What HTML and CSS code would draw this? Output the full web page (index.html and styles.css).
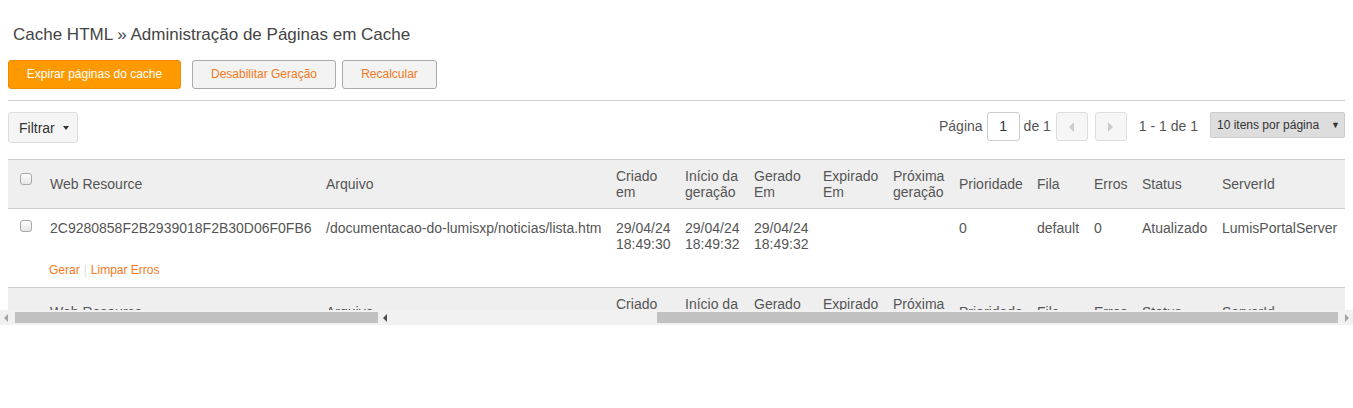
FILE: index.html
```html
<!DOCTYPE html>
<html lang="pt">
<head>
<meta charset="utf-8">
<title>Cache HTML</title>
<link rel="stylesheet" href="styles.css">
</head>
<body>
<div class="page">
  <h1 class="title">Cache HTML » Administração de Páginas em Cache</h1>
  <div class="actions">
    <button class="btn btn-primary">Expirar páginas do cache</button>
    <button class="btn btn-default btn-gap">Desabilitar Geração</button>
    <button class="btn btn-default btn-last">Recalcular</button>
  </div>
  <div class="rule"></div>
  <div class="toolbar">
    <button class="filter">Filtrar <span class="caret"></span></button>
    <div class="pager">
      <span class="ptext">Página</span>
      <span class="pinput">1</span>
      <span class="ptext">de 1</span>
      <span class="pbtn pbtn-prev"><span class="tri tri-left"></span></span>
      <span class="pbtn pbtn-next"><span class="tri tri-right"></span></span>
      <span class="ptext pcount">1 - 1 de 1</span>
      <span class="psel">10 itens por página <span class="selcaret">▼</span></span>
    </div>
  </div>
  <div class="tablewrap">
    <table class="grid">
      <colgroup>
        <col class="c-chk"><col class="c-wr"><col class="c-arq"><col class="c-d"><col class="c-d"><col class="c-d"><col class="c-e"><col class="c-p"><col class="c-pr"><col class="c-f"><col class="c-er"><col class="c-st"><col class="c-sv">
      </colgroup>
      <thead>
        <tr>
          <th class="chkcell"><span class="chk"></span></th>
          <th>Web Resource</th>
          <th>Arquivo</th>
          <th>Criado<br>em</th>
          <th>Início da<br>geração</th>
          <th>Gerado<br>Em</th>
          <th>Expirado<br>Em</th>
          <th>Próxima<br>geração</th>
          <th>Prioridade</th>
          <th>Fila</th>
          <th>Erros</th>
          <th>Status</th>
          <th>ServerId</th>
        </tr>
      </thead>
      <tbody>
        <tr class="datarow">
          <td class="chkcell"><span class="chk"></span></td>
          <td>2C9280858F2B2939018F2B30D06F0FB6</td>
          <td>/documentacao-do-lumisxp/noticias/lista.htm</td>
          <td>29/04/24<br>18:49:30</td>
          <td>29/04/24<br>18:49:32</td>
          <td>29/04/24<br>18:49:32</td>
          <td></td>
          <td></td>
          <td>0</td>
          <td>default</td>
          <td>0</td>
          <td>Atualizado</td>
          <td>LumisPortalServer</td>
        </tr>
        <tr class="actrow">
          <td></td>
          <td colspan="12" class="rowlinks"><a>Gerar</a><span class="sep">|</span><a>Limpar Erros</a></td>
        </tr>
      </tbody>
      <tfoot>
        <tr>
          <th class="chkcell"></th>
          <th>Web Resource</th>
          <th>Arquivo</th>
          <th>Criado<br>em</th>
          <th>Início da<br>geração</th>
          <th>Gerado<br>Em</th>
          <th>Expirado<br>Em</th>
          <th>Próxima<br>geração</th>
          <th>Prioridade</th>
          <th>Fila</th>
          <th>Erros</th>
          <th>Status</th>
          <th>ServerId</th>
        </tr>
      </tfoot>
    </table>
  </div>
</div>
<div class="scrollbar">
  <span class="sarrow sarrow-l"></span>
  <span class="thumb thumb-a"></span>
  <span class="sarrow sarrow-dark"></span>
  <span class="thumb thumb-b"></span>
  <span class="sarrow sarrow-r"></span>
</div>
</body>
</html>
```

FILE: styles.css
```css
* { box-sizing: border-box; }
html, body { margin: 0; padding: 0; background: #fff; }
body {
  font-family: "Liberation Sans", Arial, sans-serif;
  color: #555;
  font-size: 14px;
}
.page { padding: 25px 8px 0 8px; }
.title {
  margin: 0 0 0 5px;
  font-size: 17px;
  line-height: 20px;
  font-weight: normal;
  color: #444;
}
.actions {
  display: flex;
  margin-top: 15px;
  height: 29px;
}
.btn {
  font-family: inherit;
  font-size: 12px;
  height: 29px;
  padding: 0;
  border-radius: 3px;
  cursor: pointer;
  line-height: 27px;
  white-space: nowrap;
  text-align: center;
}
.btn-primary {
  width: 173px;
  background: #ff9900;
  border: 1px solid #f08c00;
  color: #fff;
  margin-right: 11px;
}
.btn-default {
  background: #f3f3f3;
  border: 1px solid #aaa;
  color: #f47920;
}
.btn-gap { width: 144px; margin-right: 6px; }
.btn-last { width: 95px; }
.rule {
  height: 1px;
  background: #ccc;
  margin-top: 11px;
}
.toolbar {
  display: flex;
  justify-content: space-between;
  align-items: flex-start;
  margin-top: 11px;
}
.filter {
  font-family: inherit;
  font-size: 14px;
  color: #333;
  height: 31px;
  width: 70px;
  padding: 0 0 0 10px;
  text-align: left;
  background: #f5f5f5;
  border: 1px solid #ddd;
  border-radius: 3px;
  display: flex;
  align-items: center;
}
.caret {
  display: inline-block;
  width: 0; height: 0;
  border-left: 3px solid transparent;
  border-right: 3px solid transparent;
  border-top: 4px solid #333;
  margin-left: 8px;
}
.pager {
  display: flex;
  align-items: flex-start;
}
.ptext {
  line-height: 29px;
  font-size: 14px;
  color: #555;
}
.pinput {
  width: 33px;
  height: 29px;
  border: 1px solid #ccc;
  border-radius: 3px;
  text-align: center;
  line-height: 27px;
  color: #333;
  margin: 0 4px;
}
.pbtn {
  width: 32px;
  height: 29px;
  border: 1px solid #ddd;
  border-radius: 3px;
  background: #f6f6f6;
  display: flex;
  align-items: center;
  justify-content: center;
}
.pbtn-prev { margin-left: 5px; }
.pbtn-next { margin-left: 7px; }
.tri { width: 0; height: 0; }
.tri-left {
  border-top: 5px solid transparent;
  border-bottom: 5px solid transparent;
  border-right: 5px solid #ccc;
}
.tri-right {
  border-top: 5px solid transparent;
  border-bottom: 5px solid transparent;
  border-left: 5px solid #ccc;
}
.pcount { margin-left: 12px; }
.psel {
  margin-left: 12px;
  width: 135px;
  height: 26px;
  background: #ddd;
  border: 1px solid #ccc;
  border-radius: 2px;
  font-size: 12px;
  color: #333;
  line-height: 24px;
  padding-left: 6px;
  display: flex;
  justify-content: space-between;
  padding-right: 4px;
}
.selcaret { font-size: 9px; }
.tablewrap {
  margin-top: 16px;
  height: 151px;
  overflow: hidden;
}
.grid {
  width: 100%;
  table-layout: fixed;
  border-collapse: collapse;
}
.c-chk { width: 35px; }
.c-wr { width: 276px; }
.c-arq { width: 290px; }
.c-d { width: 69px; }
.c-e { width: 70px; }
.c-p { width: 66px; }
.c-pr { width: 78px; }
.c-f { width: 57px; }
.c-er { width: 48px; }
.c-st { width: 80px; }
.c-sv { width: 130px; }
.grid th {
  background: #efefef;
  font-weight: normal;
  text-align: left;
  color: #555;
  font-size: 14px;
  line-height: 16px;
  padding: 8px 7px;
  height: 48px;
  vertical-align: middle;
  border-top: 1px solid #ccc;
  border-bottom: 1px solid #ccc;
  white-space: nowrap;
}
.grid td {
  font-size: 14px;
  line-height: 16px;
  color: #555;
  padding: 11px 7px 2px 7px;
  vertical-align: top;
  white-space: nowrap;
}
.grid th.chkcell { vertical-align: top; padding: 13px 0 0 12px; }
.grid td.chkcell { padding: 11px 0 0 12px; }
.chk {
  display: block;
  width: 12px;
  height: 12px;
  border: 1px solid #a9a9a9;
  border-radius: 3px;
  background: linear-gradient(#fdfdfd, #e6e6e6);
}
.actrow td { padding: 8px 6px 9px 6px; }
.grid td.rowlinks { font-size: 12px; line-height: 16px; }
.rowlinks a { color: #f47920; }
.rowlinks .sep { color: #ddd; margin: 0 4px; }
.scrollbar {
  display: flex;
  align-items: center;
  height: 15px;
  background: #f1f1f1;
}
.sarrow { width: 0; height: 0; }
.sarrow-l {
  margin-left: 4px;
  border-top: 4px solid transparent;
  border-bottom: 4px solid transparent;
  border-right: 4px solid #a3a3a3;
}
.thumb {
  height: 11px;
  background: #c1c1c1;
}
.thumb-a { margin-left: 7px; width: 363px; }
.sarrow-dark {
  margin-left: 5px;
  border-top: 4px solid transparent;
  border-bottom: 4px solid transparent;
  border-right: 4px solid #505050;
}
.thumb-b { margin-left: 270px; width: 681px; }
.sarrow-r {
  margin-left: 7px;
  border-top: 4px solid transparent;
  border-bottom: 4px solid transparent;
  border-left: 4px solid #a3a3a3;
}
```
